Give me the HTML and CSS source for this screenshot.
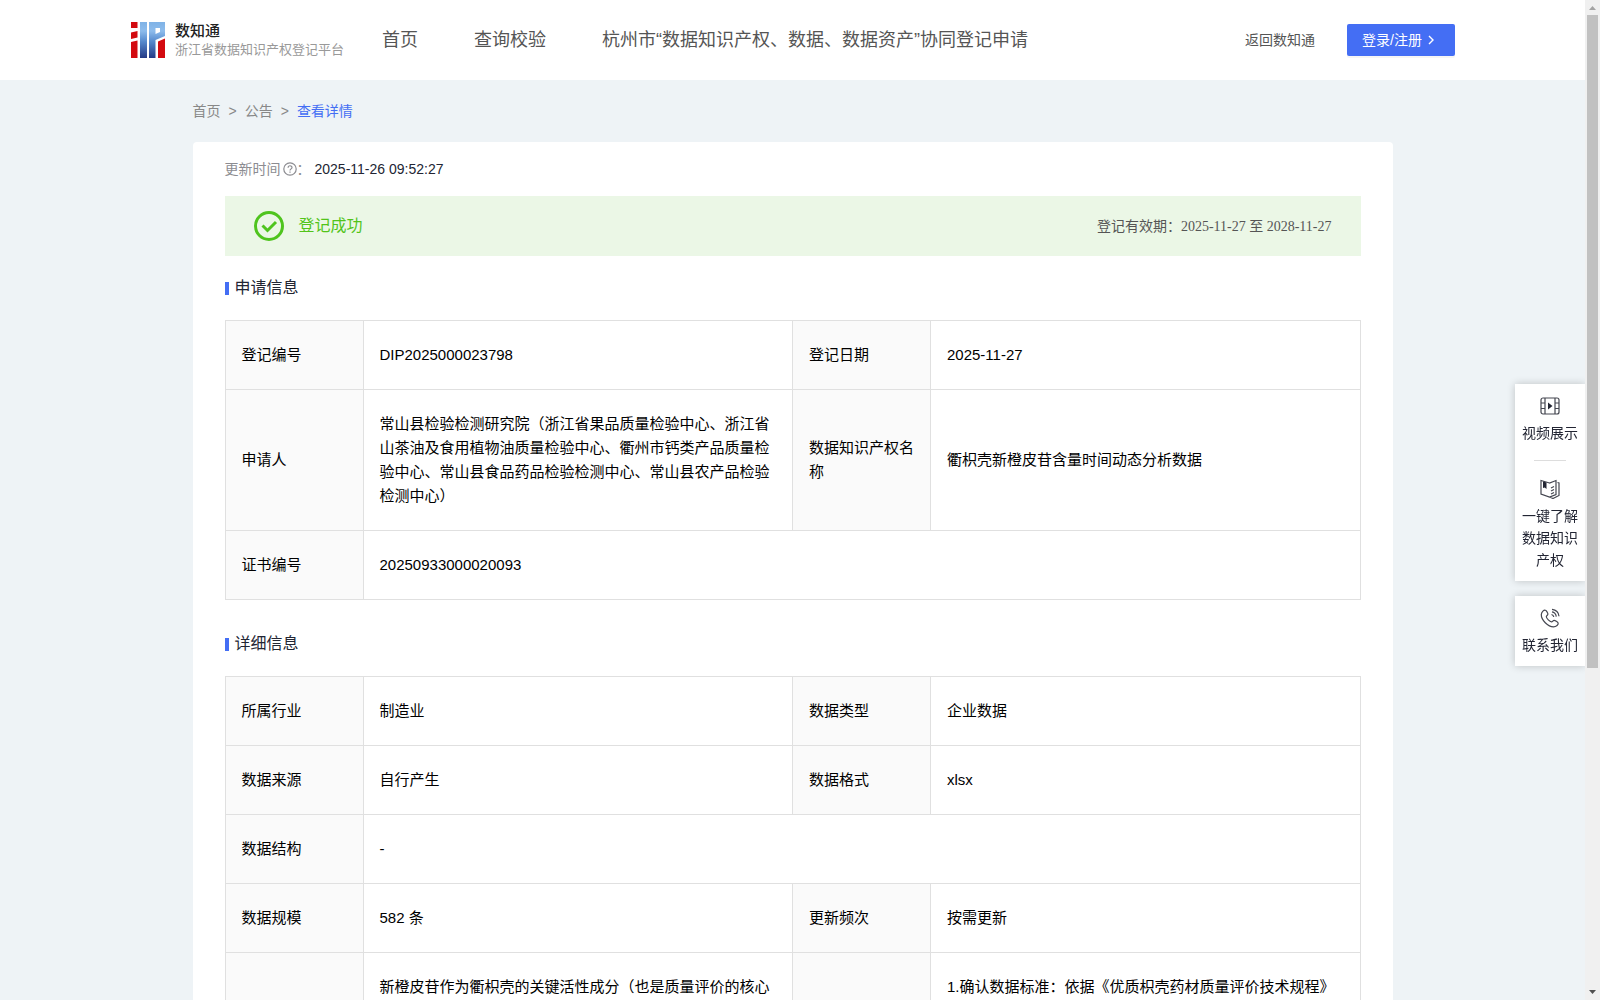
FILE: index.html
```html
<!DOCTYPE html>
<html lang="zh-CN">
<head>
<meta charset="utf-8">
<title>数知通</title>
<link rel="stylesheet" href="styles.css">
</head>
<body>
<header class="header">
  <a class="brand" href="#">
    <svg class="brand-logo" viewBox="0 0 34 36" aria-hidden="true">
      <defs><linearGradient id="blue" x1="0" y1="0" x2="0" y2="36" gradientUnits="userSpaceOnUse"><stop offset="0" stop-color="#7fb2e6"/><stop offset=".25" stop-color="#8dbcec"/><stop offset=".55" stop-color="#5488cc"/><stop offset="1" stop-color="#243a86"/></linearGradient></defs>
      <path fill="#d30a10" d="M0 0h6.500v6H0zM0 10.500l6.500-1.500v6.500L0 17zM0 20l6.500-1.500V36H0z"/>
      <path fill="url(#blue)" d="M9 0h7v36H9z"/>
      <path fill="url(#blue)" fill-rule="evenodd" d="M18 0h16v14l-9.500 4v18H18zM24.500 6v6l4.500-2V6z"/>
      <path fill="#d30a10" d="M27 19.500l7-3V36h-7z"/>
    </svg>
    <span class="brand-text"><strong class="brand-name">数知通</strong><span class="brand-sub">浙江省数据知识产权登记平台</span></span>
  </a>
  <nav class="nav">
    <a href="#">首页</a>
    <a href="#">查询校验</a>
    <a href="#">杭州市“数据知识产权、数据、数据资产”协同登记申请</a>
  </nav>
  <a class="back" href="#">返回数知通</a>
  <button class="login" type="button">登录/注册
    <svg class="login-arrow" viewBox="0 0 14 14" aria-hidden="true"><path d="M5 3l4 4-4 4" fill="none" stroke="#fff" stroke-width="1.4"/></svg>
  </button>
</header>

<main class="page">
  <nav class="crumbs">
    <a href="#">首页</a><span>&gt;</span><a href="#">公告</a><span>&gt;</span><a class="current" href="#">查看详情</a>
  </nav>
  <article class="card">
    <p class="updated"><span class="updated-label">更新时间<svg class="help" viewBox="0 0 14 14" aria-hidden="true"><circle cx="7" cy="7" r="6.2"/><path d="M5.1 5.7c0-2.6 3.9-2.5 3.9-.2C9 6.900 7 6.900 7 8.600M7 9.600v1.200"/></svg>：</span><time>2025-11-26 09:52:27</time></p>
    <div class="status">
      <svg class="status-icon" viewBox="0 0 30 30" aria-hidden="true"><circle cx="15" cy="15" r="13.500"/><path d="M8.500 14.500l5 5 8.500-8.500"/></svg>
      <span class="status-text">登记成功</span>
      <span class="validity">登记有效期：<span class="validity-date">2025-11-27 至 2028-11-27</span></span>
    </div>

    <section class="section">
      <h2 class="title">申请信息</h2>
      <table class="info">
        <colgroup><col class="col-label"><col><col class="col-label"><col></colgroup>
        <tbody>
          <tr><th scope="row">登记编号</th><td>DIP2025000023798</td><th scope="row">登记日期</th><td>2025-11-27</td></tr>
          <tr><th scope="row">申请人</th><td>常山县检验检测研究院（浙江省果品质量检验中心、浙江省山茶油及食用植物油质量检验中心、衢州市钙类产品质量检验中心、常山县食品药品检验检测中心、常山县农产品检验检测中心）</td><th scope="row">数据知识产权名称</th><td>衢枳壳新橙皮苷含量时间动态分析数据</td></tr>
          <tr><th scope="row">证书编号</th><td colspan="3">20250933000020093</td></tr>
        </tbody>
      </table>
    </section>

    <section class="section section-next">
      <h2 class="title">详细信息</h2>
      <table class="info">
        <colgroup><col class="col-label"><col><col class="col-label"><col></colgroup>
        <tbody>
          <tr><th scope="row">所属行业</th><td>制造业</td><th scope="row">数据类型</th><td>企业数据</td></tr>
          <tr><th scope="row">数据来源</th><td>自行产生</td><th scope="row">数据格式</th><td>xlsx</td></tr>
          <tr><th scope="row">数据结构</th><td colspan="3">-</td></tr>
          <tr><th scope="row">数据规模</th><td>582 条</td><th scope="row">更新频次</th><td>按需更新</td></tr>
          <tr class="long"><th></th><td>新橙皮苷作为衢枳壳的关键活性成分（也是质量评价的核心</td><th></th><td>1.确认数据标准：依据《优质枳壳药材质量评价技术规程》</td></tr>
        </tbody>
      </table>
    </section>
  </article>
</main>

<aside class="dock">
  <div class="dock-box">
    <a class="dock-item" href="#">
      <svg viewBox="0 0 20 20" aria-hidden="true"><rect x="1" y="2" width="18" height="16" rx="2"/><path d="M5 2v16M15 2v16M1 7h4M1 12.500h4M15 7h4M15 12.500h4"/><path class="solid" d="M8 6.500l4.500 3.500L8 13.500z"/></svg>
      <span>视频展示</span>
    </a>
    <hr class="dock-line">
    <a class="dock-item" href="#">
      <svg viewBox="0 0 20 20" aria-hidden="true"><path d="M9.500 4L1 1.500v13.500l8.500 3 6.500-2.500V1.500zM17.500 3.500l1.500.5v12.500L13 19.500l-3.500-1.500M11 9l3-1.500M11 12l3-1.500M11 15l3-1.500"/><path class="solid" d="M3 2.500l3.500 1v6.500L4.700 8.500 3 9z"/></svg>
      <span>一键了解数据知识产权</span>
    </a>
  </div>
  <div class="dock-box">
    <a class="dock-item" href="#">
      <svg viewBox="0 0 20 20" aria-hidden="true"><path d="M5.500 2.200C4 1.500 1.500 3.800 1.300 6.500 1.100 12 8 18.800 13.500 18.800c2.700 0 5.300-2.300 4.600-3.900-.4-.9-3-2.500-4-2.500-1.200 0-1.500 1.600-2.600 1.500C9.700 13.700 6.500 10.500 6.300 8.800 6.200 7.700 7.900 7.300 7.900 6 7.900 5 6.300 2.500 5.500 2.200zM11.500 6.500c1.300.3 2 1 2.300 2.500M12 3.900c2.400.4 3.900 2 4.300 4.800M12 1.300c4 .4 6.600 3 7 7"/></svg>
      <span>联系我们</span>
    </a>
  </div>
</aside>

<div class="scrollbar" aria-hidden="true">
  <svg viewBox="0 0 15 15"><path fill="#a3a3a3" d="M4 10l3.500-4L11 10z"/></svg>
  <div class="thumb-track"><div class="thumb"></div></div>
  <svg viewBox="0 0 15 15"><path fill="#505050" d="M4 5l3.500 4L11 5z"/></svg>
</div>
</body>
</html>
```
FILE: styles.css
```css
* { box-sizing: border-box; }

body {
  margin: 0;
  height: 100vh;
  overflow: hidden;
  padding-right: 15px;
  background: #eef3f6;
  color: #000;
  font: 14px/24px "Liberation Sans", "Noto Sans CJK SC", sans-serif;
}

a { color: inherit; text-decoration: none; }

.header {
  display: flex;
  align-items: center;
  height: 80px;
  padding: 0 130px 0 131px;
  background: #fff;
  color: #555;
}

.brand { display: flex; align-items: center; gap: 10px; }
.brand-logo { width: 34px; height: 36px; }
.brand-text { display: flex; flex-direction: column; }
.brand-name { color: #222; font-size: 15px; font-weight: 500; line-height: 20px; }
.brand-sub { color: #999; font-size: 13px; line-height: 18px; white-space: nowrap; }

.nav {
  display: flex;
  gap: 56px;
  margin-left: 38px;
  font-size: 18px;
  white-space: nowrap;
}
.back { margin-left: auto; white-space: nowrap; }

.login {
  display: flex;
  align-items: center;
  gap: 2px;
  width: 108px;
  height: 32px;
  margin-left: 32px;
  padding: 0 15px;
  border: 0;
  border-radius: 2px;
  background: #446ef4;
  box-shadow: 0 2px 0 rgba(0, 0, 0, .04);
  color: #fff;
  font: inherit;
  white-space: nowrap;
}
.login-arrow { width: 14px; height: 14px; }

.page { max-width: 1200px; margin: 0 auto; }

.crumbs {
  display: flex;
  gap: 8px;
  padding: 19px 0;
  color: #888;
}
.crumbs .current { color: #446ef4; }

.card {
  padding: 15px 32px 32px;
  border-radius: 4px;
  background: #fff;
}

.updated { display: flex; gap: 4px; margin: 0 0 15px; color: #222533; }
.updated-label { display: flex; align-items: center; color: #8c8c91; }
.help { width: 14px; height: 14px; margin-left: 2px; fill: none; stroke: #8c8c91; stroke-width: 1.2; }

.status {
  display: flex;
  align-items: center;
  height: 60px;
  padding: 0 29px;
  background: #ebf7e6;
}
.status-icon { width: 30px; height: 30px; fill: none; stroke: #4fc41e; stroke-width: 3; }
.status-text { margin-left: 15px; color: #52c41a; font-size: 16px; }
.validity { margin-left: auto; color: #555; }
.validity-date { font-family: "Liberation Serif", "Noto Sans CJK SC", serif; }

.section { margin-top: 20px; }
.section-next { margin-top: 32px; }

.title {
  display: flex;
  align-items: center;
  gap: 6px;
  margin: 0 0 20px;
  color: #222533;
  font-size: 16px;
  font-weight: 400;
}
.title::before { width: 4px; height: 13px; background: #446ef4; content: ""; }

.info {
  width: 100%;
  border-collapse: collapse;
  table-layout: fixed;
  font-size: 15px;
}
.col-label { width: 138px; }
.info th,
.info td {
  padding: 22px 16px;
  border: 1px solid #e0e0e0;
  font-weight: 400;
  text-align: left;
}
.info th { background: #fafafa; }
.long { height: 240px; vertical-align: top; }

.dock {
  position: fixed;
  top: 384px;
  right: 15px;
  display: flex;
  flex-direction: column;
  gap: 15px;
  width: 70px;
  color: #222533;
  line-height: 22px;
  text-align: center;
}
.dock-box {
  padding: 12px 7px 10px;
  background: #fff;
  box-shadow: 0 0 8px rgba(0, 0, 0, .2);
}
.dock-item { display: flex; flex-direction: column; align-items: center; gap: 6px; }
.dock-item svg { width: 20px; height: 20px; fill: none; stroke: #444650; stroke-width: 1.2; }
.dock-item .solid { fill: #222533; stroke: none; }
.dock-line { width: 32px; margin: 16px auto 18px; border: 0; border-top: 1px solid #ddd; }

.scrollbar {
  position: fixed;
  top: 0;
  right: 0;
  bottom: 0;
  display: flex;
  flex-direction: column;
  width: 15px;
  background: #f0f0f0;
}
.scrollbar svg { width: 15px; height: 15px; }
.thumb-track { flex: 1; padding: 0 2px; }
.thumb { height: 67.3%; background: #c1c1c1; }
```
